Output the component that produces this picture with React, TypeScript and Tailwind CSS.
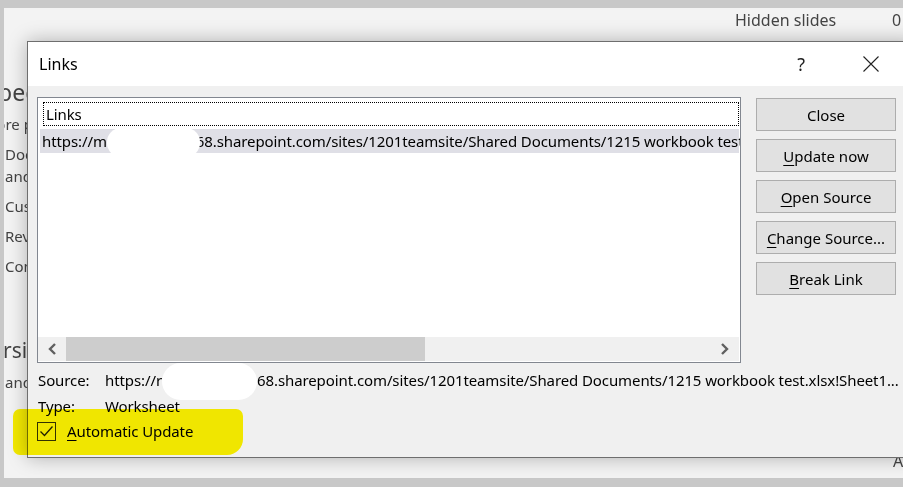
import React from "react";

const LINK_TAIL = "68.sharepoint.com/sites/1201teamsite/Shared Documents/1215 workbook test.xlsx";

export default function App() {
  return (
    <div className="relative h-[487px] w-[903px] overflow-hidden bg-[#c8c8c8] pb-[9px] pl-[4px] pt-[8px] font-['Noto_Sans',sans-serif]">
      <BackstagePanel />
      <LinksDialog />
      {/* marker highlight drawn over the screenshot */}
      <div className="pointer-events-none absolute left-[13px] top-[409px] h-[46px] w-[230px] rounded-[7px] rounded-br-[16px] bg-[#fff500] mix-blend-multiply" />
    </div>
  );
}

function BackstagePanel() {
  return (
    <div className="flex h-full w-full flex-col overflow-hidden bg-[#f3f3f3] text-[#444]">
      <div className="flex h-[22px] shrink-0 items-center whitespace-nowrap pl-[731px] pt-[1px] text-[16px]">
        <span className="w-[157px]">Hidden slides</span>
        <span>0</span>
      </div>
      <div className="ml-[-39px] mt-[48px] h-[29px] whitespace-nowrap text-[23px] leading-[29px]">
        Inspect Presentation
      </div>
      <div className="ml-[-31px] mt-[6px] whitespace-nowrap text-[15px] leading-[22px]">
        <div>Before publishing this file, be aware that it contains:</div>
        <ul className="ml-[32px]">
          <li className="mt-[8px]">
            <div>Document properties, author's name</div>
            <div>and cropped out image data</div>
          </li>
          <li className="mt-[8px]">Custom XML data</li>
          <li className="mt-[8px]">Review comments</li>
          <li className="mt-[8px]">Content add-ins</li>
        </ul>
      </div>
      <div className="ml-[-25px] mt-[59px] h-[29px] whitespace-nowrap text-[21px] leading-[29px]">
        Version History
      </div>
      <div className="ml-[1px] mt-[6px] whitespace-nowrap text-[15px] leading-[22px]">
        and restore previous versions.
      </div>
      <div className="mb-[6px] mt-auto whitespace-nowrap pl-[889px] text-[16px] leading-[22px]">Author</div>
    </div>
  );
}

function Underlined({ ch }: { ch: string }) {
  return <span className="underline decoration-1 underline-offset-[3px]">{ch}</span>;
}

function DialogButton({ children }: { children: React.ReactNode }) {
  return (
    <button className="flex h-[33px] w-[140px] items-center justify-center border border-[#adadad] bg-[#e1e1e1] text-[15px] text-black">
      {children}
    </button>
  );
}

function Chevron({ dir }: { dir: "left" | "right" }) {
  return (
    <svg width="10" height="12" viewBox="0 0 10 12" fill="none">
      <polyline
        points={dir === "left" ? "8,1 3,6 8,11" : "2,1 7,6 2,11"}
        stroke="#606060"
        strokeWidth="2.4"
      />
    </svg>
  );
}

function LinksDialog() {
  return (
    <div className="absolute left-[27px] top-[41px] flex h-[417px] w-[890px] flex-col border border-[#6e6e6e] bg-[#f0f0f0] text-black shadow-[0_0_18px_rgba(0,0,0,0.28)]">
      {/* title bar */}
      <div className="flex h-[44px] shrink-0 items-center bg-white">
        <span className="pl-[11px] text-[16px]">Links</span>
        <span className="ml-auto text-[18px] text-[#222]">?</span>
        <svg className="ml-[58px] mr-[37px]" width="16" height="16" viewBox="0 0 16 16">
          <path d="M0.5 0.5 L15.5 15.5 M15.5 0.5 L0.5 15.5" stroke="#222" strokeWidth="1.1" />
        </svg>
      </div>

      {/* body */}
      <div className="flex flex-1 flex-col pl-[9px] pt-[11px] text-[15px] leading-[22px] tracking-[-0.1px]">
        <div className="flex">
          <div className="flex h-[266px] w-[704px] flex-col overflow-hidden border border-[#828790] bg-white">
            <div className="flex-1">
              <div className="ml-[5px] mr-[1px] mt-[4px] h-[24px] border border-dotted border-black pl-[2px] leading-[22px]">
                Links
              </div>
              <div className="ml-[2px] mr-[1px] mt-[3px] h-[24px] whitespace-nowrap bg-[#dfdfe6] pl-[2px] leading-[24px]">
                https://m
                <span className="relative -mr-[4px] -my-[3px] inline-block h-[29px] w-[93px] rounded-[14px] bg-white align-middle" />
                {LINK_TAIL}
              </div>
            </div>
            <div className="mb-[1px] mr-[1px] flex h-[24px] shrink-0 bg-[#f0f0f0]">
              <div className="flex w-[28px] items-center justify-center">
                <Chevron dir="left" />
              </div>
              <div className="w-[359px] bg-[#cdcdcd]" />
              <div className="flex-1" />
              <div className="flex w-[28px] items-center justify-center">
                <Chevron dir="right" />
              </div>
            </div>
          </div>

          <div className="ml-[15px] flex flex-col gap-[8px] pt-[1px] tracking-normal">
            <DialogButton>Close</DialogButton>
            <DialogButton>
              <Underlined ch="U" />pdate now
            </DialogButton>
            <DialogButton>
              <Underlined ch="O" />pen Source
            </DialogButton>
            <DialogButton>
              <Underlined ch="C" />hange Source...
            </DialogButton>
            <DialogButton>
              <Underlined ch="B" />reak Link
            </DialogButton>
          </div>
        </div>

        <div className="mt-[6px] flex whitespace-nowrap pl-[1px]">
          <span className="w-[67px] shrink-0">Source:</span>
          <span>
            https://r
            <span className="-my-[8px] inline-block h-[37px] w-[95px] rounded-full bg-white align-middle" />
            {LINK_TAIL}!Sheet1...
          </span>
        </div>
        <div className="mt-[3px] flex whitespace-nowrap pl-[1px]">
          <span className="w-[67px] shrink-0">Type:</span>
          <span>Worksheet</span>
        </div>
        <label className="mt-[3px] flex items-center">
          <span className="flex h-[19px] w-[19px] items-center justify-center border border-[#333]">
            <svg width="15" height="13" viewBox="0 0 15 13" fill="none">
              <polyline points="1.5,6.5 5.5,10.5 13.5,1.5" stroke="#222" strokeWidth="1.3" />
            </svg>
          </span>
          <span className="ml-[11px]">
            <Underlined ch="A" />utomatic Update
          </span>
        </label>
      </div>
    </div>
  );
}
